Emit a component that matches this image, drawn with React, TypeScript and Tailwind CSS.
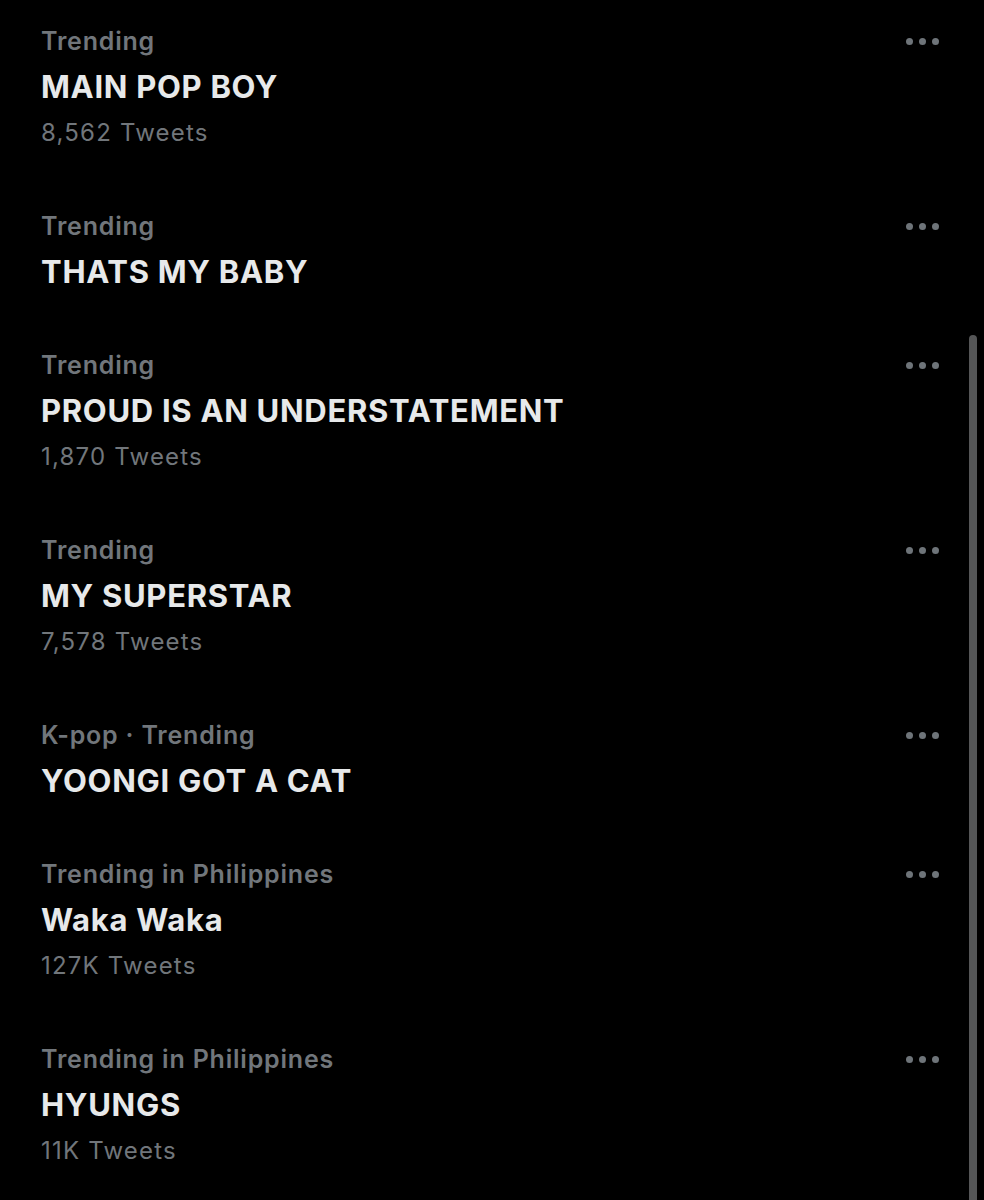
import React from "react";

type Trend = {
  category: string;
  title: string;
  count?: string;
};

const trends: Trend[] = [
  { category: "Trending", title: "MAIN POP BOY", count: "8,562 Tweets" },
  { category: "Trending", title: "THATS MY BABY" },
  { category: "Trending", title: "PROUD IS AN UNDERSTATEMENT", count: "1,870 Tweets" },
  { category: "Trending", title: "MY SUPERSTAR", count: "7,578 Tweets" },
  { category: "K-pop · Trending", title: "YOONGI GOT A CAT" },
  { category: "Trending in Philippines", title: "Waka Waka", count: "127K Tweets" },
  { category: "Trending in Philippines", title: "HYUNGS", count: "11K Tweets" },
];

function MoreDots() {
  return (
    <div className="flex items-center gap-[6px]">
      <span className="block h-[7px] w-[7px] rounded-full bg-[#6e7479]" />
      <span className="block h-[7px] w-[7px] rounded-full bg-[#6e7479]" />
      <span className="block h-[7px] w-[7px] rounded-full bg-[#6e7479]" />
    </div>
  );
}

function TrendRow({ t }: { t: Trend }) {
  return (
    <div className="flex items-start justify-between pl-[41px] pr-[45px] pt-[24px] pb-[23px]">
      <div className="flex flex-col">
        <div className="text-[25px] leading-[46px] font-semibold tracking-[0.8px] text-[#71767b]">
          {t.category}
        </div>
        <div className="text-[31px] leading-[46px] font-bold tracking-[0.7px] text-[#e7e9ea]">
          {t.title}
        </div>
        {t.count ? (
          <div className="text-[24px] leading-[46px] font-normal tracking-[1.2px] text-[#71767b]">
            {t.count}
          </div>
        ) : null}
      </div>
      <div className="flex h-[46px] items-center">
        <MoreDots />
      </div>
    </div>
  );
}

export default function App() {
  return (
    <div
      className="relative h-[1200px] w-[984px] overflow-hidden bg-black"
      style={{ fontFamily: "Inter, 'Liberation Sans', sans-serif" }}
    >
      <div className="-mt-[6px] flex flex-col">
        {trends.map((t, i) => (
          <TrendRow key={i} t={t} />
        ))}
      </div>
      {/* scrollbar thumb */}
      <div className="absolute right-[7px] top-[335px] h-[880px] w-[8px] rounded-full bg-[#555657]" />
    </div>
  );
}
